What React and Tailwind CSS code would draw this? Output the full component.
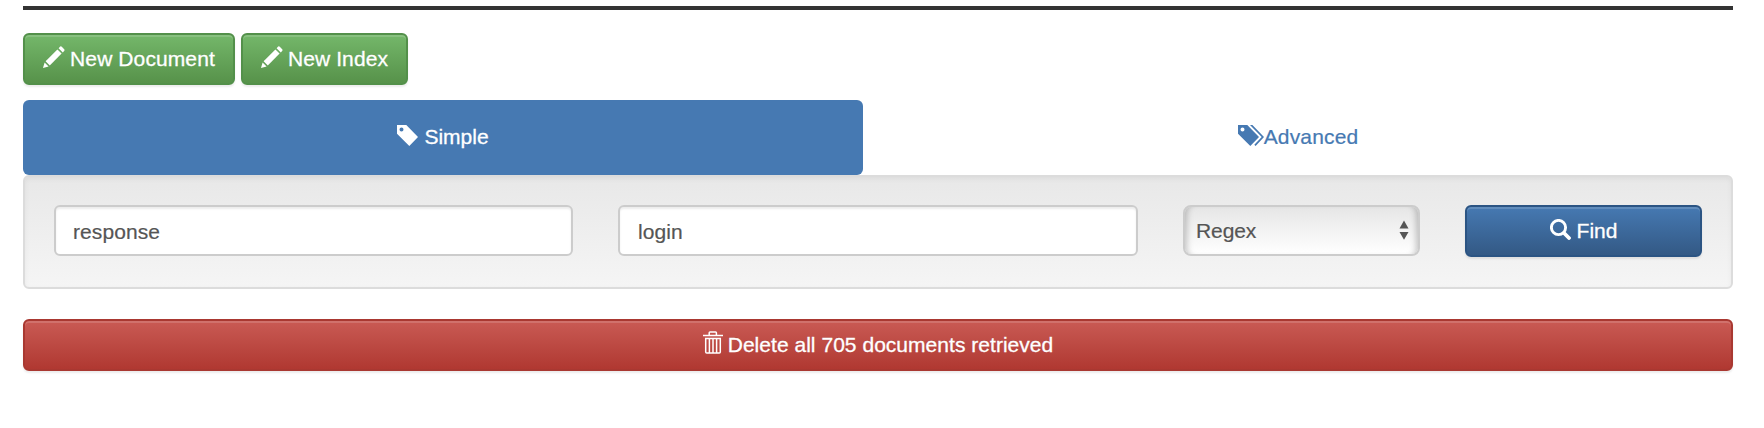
const PATHS = {
  pencil: { w: 22, h: 22, d: ["M0 22 L1.6 16.4 L5.6 20.4 Z", "M2.6 15.2 L14.4 3.4 L18.6 7.6 L6.8 19.4 Z", "M15.6 2.2 L17.2 0.6 Q18 0 18.8 0.7 L21.2 3.2 Q22 4 21.3 4.8 L19.8 6.4 Z"] },
  tag: { w: 21, h: 21, d: ["M0 0 H9.3 L21 12 L12.3 21 L0 8.7 Z M4.5 2.4 A2 2 0 1 0 4.5 6.4 A2 2 0 1 0 4.5 2.4 Z"] },
  tags: { w: 26, h: 21, d: ["M0 0 H9.3 L21 12 L12.3 21 L0 8.7 Z M4.5 2.4 A2 2 0 1 0 4.5 6.4 A2 2 0 1 0 4.5 2.4 Z", "M12 0 H14.4 L26 12 L17.6 21 L16.3 19.7 L23.7 12 Z"] },
};

function Glyph({ name, className }) {
  const { w, h, d } = PATHS[name];
  return (
    <svg viewBox={`0 0 ${w} ${h}`} width={w} height={h} className={className} fill="currentColor" fillRule="evenodd" aria-hidden="true">
      {d.map((p) => <path key={p} d={p} />)}
    </svg>
  );
}

function Search() {
  return (
    <svg viewBox="0 0 21 21" width="21" height="21" className="relative -top-px mr-1.5" fill="none" stroke="currentColor" aria-hidden="true">
      <circle cx="8.5" cy="8.5" r="7.1" strokeWidth="2.9" />
      <path d="M14 14 L19 19" strokeWidth="3.8" strokeLinecap="round" />
    </svg>
  );
}

function Trash() {
  return (
    <svg viewBox="0 0 20 23" width="20" height="23" className="relative -top-0.5 mr-[5px]" fill="none" stroke="currentColor" aria-hidden="true">
      <path d="M0 4.5 H20" strokeWidth="1.5" />
      <path d="M6.2 4 V1.8 Q6.2 1 7 1 H12.6 Q13.4 1 13.4 1.8 V4" strokeWidth="1.5" />
      <path d="M2.7 7.5 H17.3 V21 Q17.3 22 16.3 22 H3.7 Q2.7 22 2.7 21 Z" strokeWidth="1.5" />
      <path d="M6.4 7.5 V22 M10 7.5 V22 M13.6 7.5 V22" strokeWidth="1.5" />
    </svg>
  );
}

const button = "flex h-[52px] items-center justify-center rounded-md border-2 pb-px text-white [-webkit-text-stroke:0.3px_currentColor] [text-shadow:0_-1px_0_rgba(0,0,0,0.1)] shadow-[inset_0_2px_0_rgba(255,255,255,0.15),0_2px_2px_rgba(0,0,0,0.075)]";
const green = "border-[#53904a] bg-linear-to-b from-[#74b76a] to-[#57924a] tracking-[0.1px]";
const input = "h-[51px] min-w-0 rounded-md border-2 border-[#ccc] bg-white pt-0.5 text-[#555] tracking-[0.08px] outline-none [-webkit-text-stroke:0.2px_currentColor] shadow-[inset_0_2px_2px_rgba(0,0,0,0.075)]";

export default function App() {
  return (
    <main className="h-[428px] w-[1764px] bg-white pt-1.5 pr-[31px] pl-[23px] font-['Liberation_Sans',Arial,sans-serif] text-[21px]/[30px]">
      <hr className="h-1 border-0 bg-[#333]" />
      <div className="mt-[23px] flex gap-1.5">
        <button className={`${button} ${green} w-[212px]`}><Glyph name="pencil" className="relative -top-0.5 mr-[5px]" />New Document</button>
        <button className={`${button} ${green} w-[167px]`}><Glyph name="pencil" className="relative -top-0.5 mr-[5px]" />New Index</button>
      </div>
      <nav className="mt-[15px] grid h-[75px] grid-cols-[840px_870px]">
        <a className="flex items-center justify-center rounded-md bg-[#4679b2] pb-0.5 text-white [-webkit-text-stroke:0.3px_currentColor]"><Glyph name="tag" className="relative -top-px mr-1.5" />Simple</a>
        <a className="flex items-center justify-center pb-0.5 text-[#4679b2] tracking-[0.15px] [-webkit-text-stroke:0.2px_currentColor]"><Glyph name="tags" className="relative -top-px" />Advanced</a>
      </nav>
      <form className="flex h-[114px] items-start rounded-md border-2 border-[#dcdcdc] bg-linear-to-b from-[#e8e8e8] to-[#f5f5f5] px-[29px] pt-7 shadow-[inset_0_2px_5px_rgba(0,0,0,0.05),0_2px_0_rgba(255,255,255,0.1)]" onSubmit={(e) => e.preventDefault()}>
        <input className={`${input} w-[519px] px-[17px]`} defaultValue="response" />
        <input className={`${input} ml-[45px] w-[520px] px-[18px]`} defaultValue="login" />
        <button type="button" className="ml-[45px] flex h-[51px] w-[237px] items-center justify-between rounded-lg border-2 border-[#ccc] bg-linear-to-b from-[#e6e6e6] to-white pt-px pr-[9px] pl-[11px] text-[#555] tracking-[-0.1px] [-webkit-text-stroke:0.2px_currentColor] shadow-[inset_7px_0_6px_-5px_rgba(0,0,0,0.22),inset_-7px_0_6px_-5px_rgba(0,0,0,0.22)]">
          Regex
          <svg viewBox="0 0 10 20" width="10" height="20" className="relative -top-px" fill="currentColor" aria-hidden="true"><path d="M0.5 8.5 L5 0.5 L9.5 8.5 Z M0.5 12 H9.5 L5 19.7 Z" /></svg>
        </button>
        <button className={`${button} ml-[45px] w-[237px] border-[#2b5483] bg-linear-to-b from-[#4679b2] to-[#335985]`}><Search />Find</button>
      </form>
      <button className={`${button} mt-[30px] w-full border-[#a93831] bg-linear-to-b from-[#c95a54] to-[#b03831] tracking-[0.03px]`}><Trash />Delete all 705 documents retrieved</button>
    </main>
  );
}
